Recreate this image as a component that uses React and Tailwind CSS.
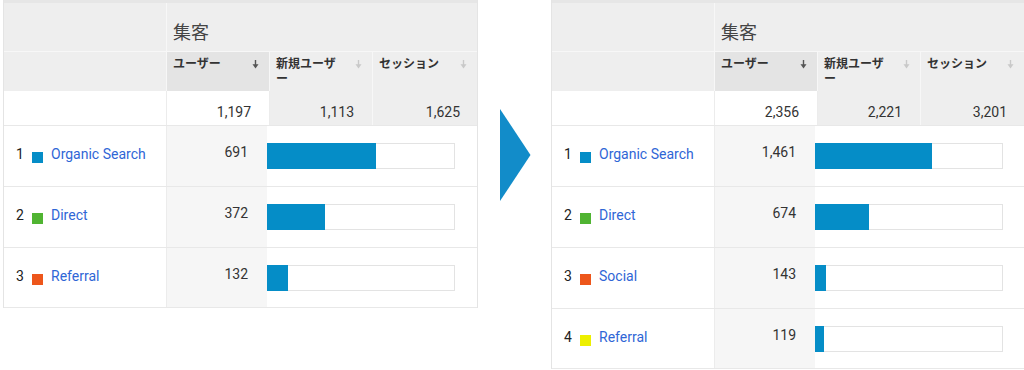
import React from 'react';

const BAR_MAX = 188;

const leftData = {
    total: 1197,
    totals: ['1,197', '1,113', '1,625'],
    rows: [
        { n: 1, color: 'bg-[#058dc7]', label: 'Organic Search', value: 691 },
        { n: 2, color: 'bg-[#50b432]', label: 'Direct', value: 372 },
        { n: 3, color: 'bg-[#ed561b]', label: 'Referral', value: 132 },
    ],
};

const rightData = {
    total: 2356,
    totals: ['2,356', '2,221', '3,201'],
    rows: [
        { n: 1, color: 'bg-[#058dc7]', label: 'Organic Search', value: 1461 },
        { n: 2, color: 'bg-[#50b432]', label: 'Direct', value: 674 },
        { n: 3, color: 'bg-[#ed561b]', label: 'Social', value: 143 },
        { n: 4, color: 'bg-[#edef00]', label: 'Referral', value: 119 },
    ],
};

const fmt = (v) => v.toLocaleString('en-US');

const SortArrow = ({ active }) => (
    <svg width="7" height="9" viewBox="0 0 7 9" className="mt-[3px] shrink-0">
        <path d="M3.5 0v5" stroke={active ? '#555' : '#c9c9c9'} strokeWidth="1.4" />
        <path d="M0.5 4.2h6L3.5 8.5z" fill={active ? '#555' : '#c9c9c9'} />
    </svg>
);

const HeaderCell = ({ children, active, className }) => (
    <div className={`flex justify-between pl-[6px] pr-[10px] pt-[5px] text-[12px] leading-[15px] font-bold text-[#333] ${className}`}>
        <span>{children}</span>
        <SortArrow active={active} />
    </div>
);

const ReportTable = ({ data, width, rightBorder }) => (
    <div className={`${width} shrink-0 border-l border-[#e4e4e4] ${rightBorder ? 'border-r' : ''}`}>
        {/* 集客 */}
        <div className="flex h-[51px] border-t-[3px] border-[#e6e6e6] bg-[#eeeeee]">
            <div className="w-[163px] shrink-0 border-r border-[#f7f7f7]" />
            <div className="flex-1 pl-[6px] pt-[19px] text-[18px] leading-[22px] text-[#444]">集客</div>
        </div>

        {/* column headers */}
        <div className="flex h-[40px] border-t border-[#f7f7f7] bg-[#eeeeee]">
            <div className="w-[163px] shrink-0 border-r border-[#f7f7f7]" />
            <HeaderCell active className="w-[103px] shrink-0 border-r border-[#f7f7f7] bg-[#e4e4e4]">ユーザー</HeaderCell>
            <HeaderCell className="w-[103px] shrink-0 border-r border-[#f7f7f7]">
                新規ユーザ<br />ー
            </HeaderCell>
            <HeaderCell className="flex-1">セッション</HeaderCell>
        </div>

        {/* totals */}
        <div className="flex h-[34px] text-[14px] leading-4 text-[#333]">
            <div className="w-[163px] shrink-0 border-r border-[#ececec] bg-white" />
            <div className="w-[103px] shrink-0 border-r border-[#ececec] bg-white pt-[13px] pr-[18px] text-right">{data.totals[0]}</div>
            <div className="w-[103px] shrink-0 border-r border-[#f7f7f7] bg-[#eeeeee] pt-[13px] pr-[18px] text-right">{data.totals[1]}</div>
            <div className="flex-1 bg-[#eeeeee] pt-[13px] pr-[17px] text-right">{data.totals[2]}</div>
        </div>

        {/* rows */}
        {data.rows.map((row, i) => (
            <div
                key={row.n}
                className={`flex h-[61px] border-t border-[#e8e8e8] text-[14px] leading-4 ${i === data.rows.length - 1 ? 'border-b' : ''}`}
            >
                <div className="flex w-[163px] shrink-0 items-start border-r border-[#ececec] pl-[12px] pt-[20px]">
                    <span className="w-[16px] text-[#222]">{row.n}</span>
                    <span className={`mt-[6px] h-[11px] w-[11px] ${row.color}`} />
                    <span className="ml-[8px] text-[#2f66d6]">{row.label}</span>
                </div>
                <div className="w-[100px] shrink-0 bg-[#f6f6f6] pt-[18px] pr-[19px] text-right text-[#333]">{fmt(row.value)}</div>
                <div className="flex-1 pt-[17px]">
                    <div className="h-[26px] w-[188px] border border-[#e3e3e3] bg-white">
                        <div
                            className="-ml-px -mt-px h-[26px] bg-[#058dc7]"
                            style={{ width: Math.round((row.value / data.total) * BAR_MAX) }}
                        />
                    </div>
                </div>
            </div>
        ))}
    </div>
);

export default function App() {
    return (
        <div className="flex h-[370px] w-[1024px] overflow-hidden bg-white pl-[3px] font-['Roboto','Noto_Sans_CJK_JP',sans-serif]">
            <div className="self-start">
                <ReportTable data={leftData} width="w-[475px]" rightBorder />
            </div>
            <div className="w-[73px] shrink-0 pl-[22px] pt-[109px]">
                <svg width="31" height="92" viewBox="0 0 31 92">
                    <polygon points="0,0 30.5,46 0,92" fill="#128cc9" />
                </svg>
            </div>
            <div className="self-start">
                <ReportTable data={rightData} width="w-[473px]" />
            </div>
        </div>
    );
}
